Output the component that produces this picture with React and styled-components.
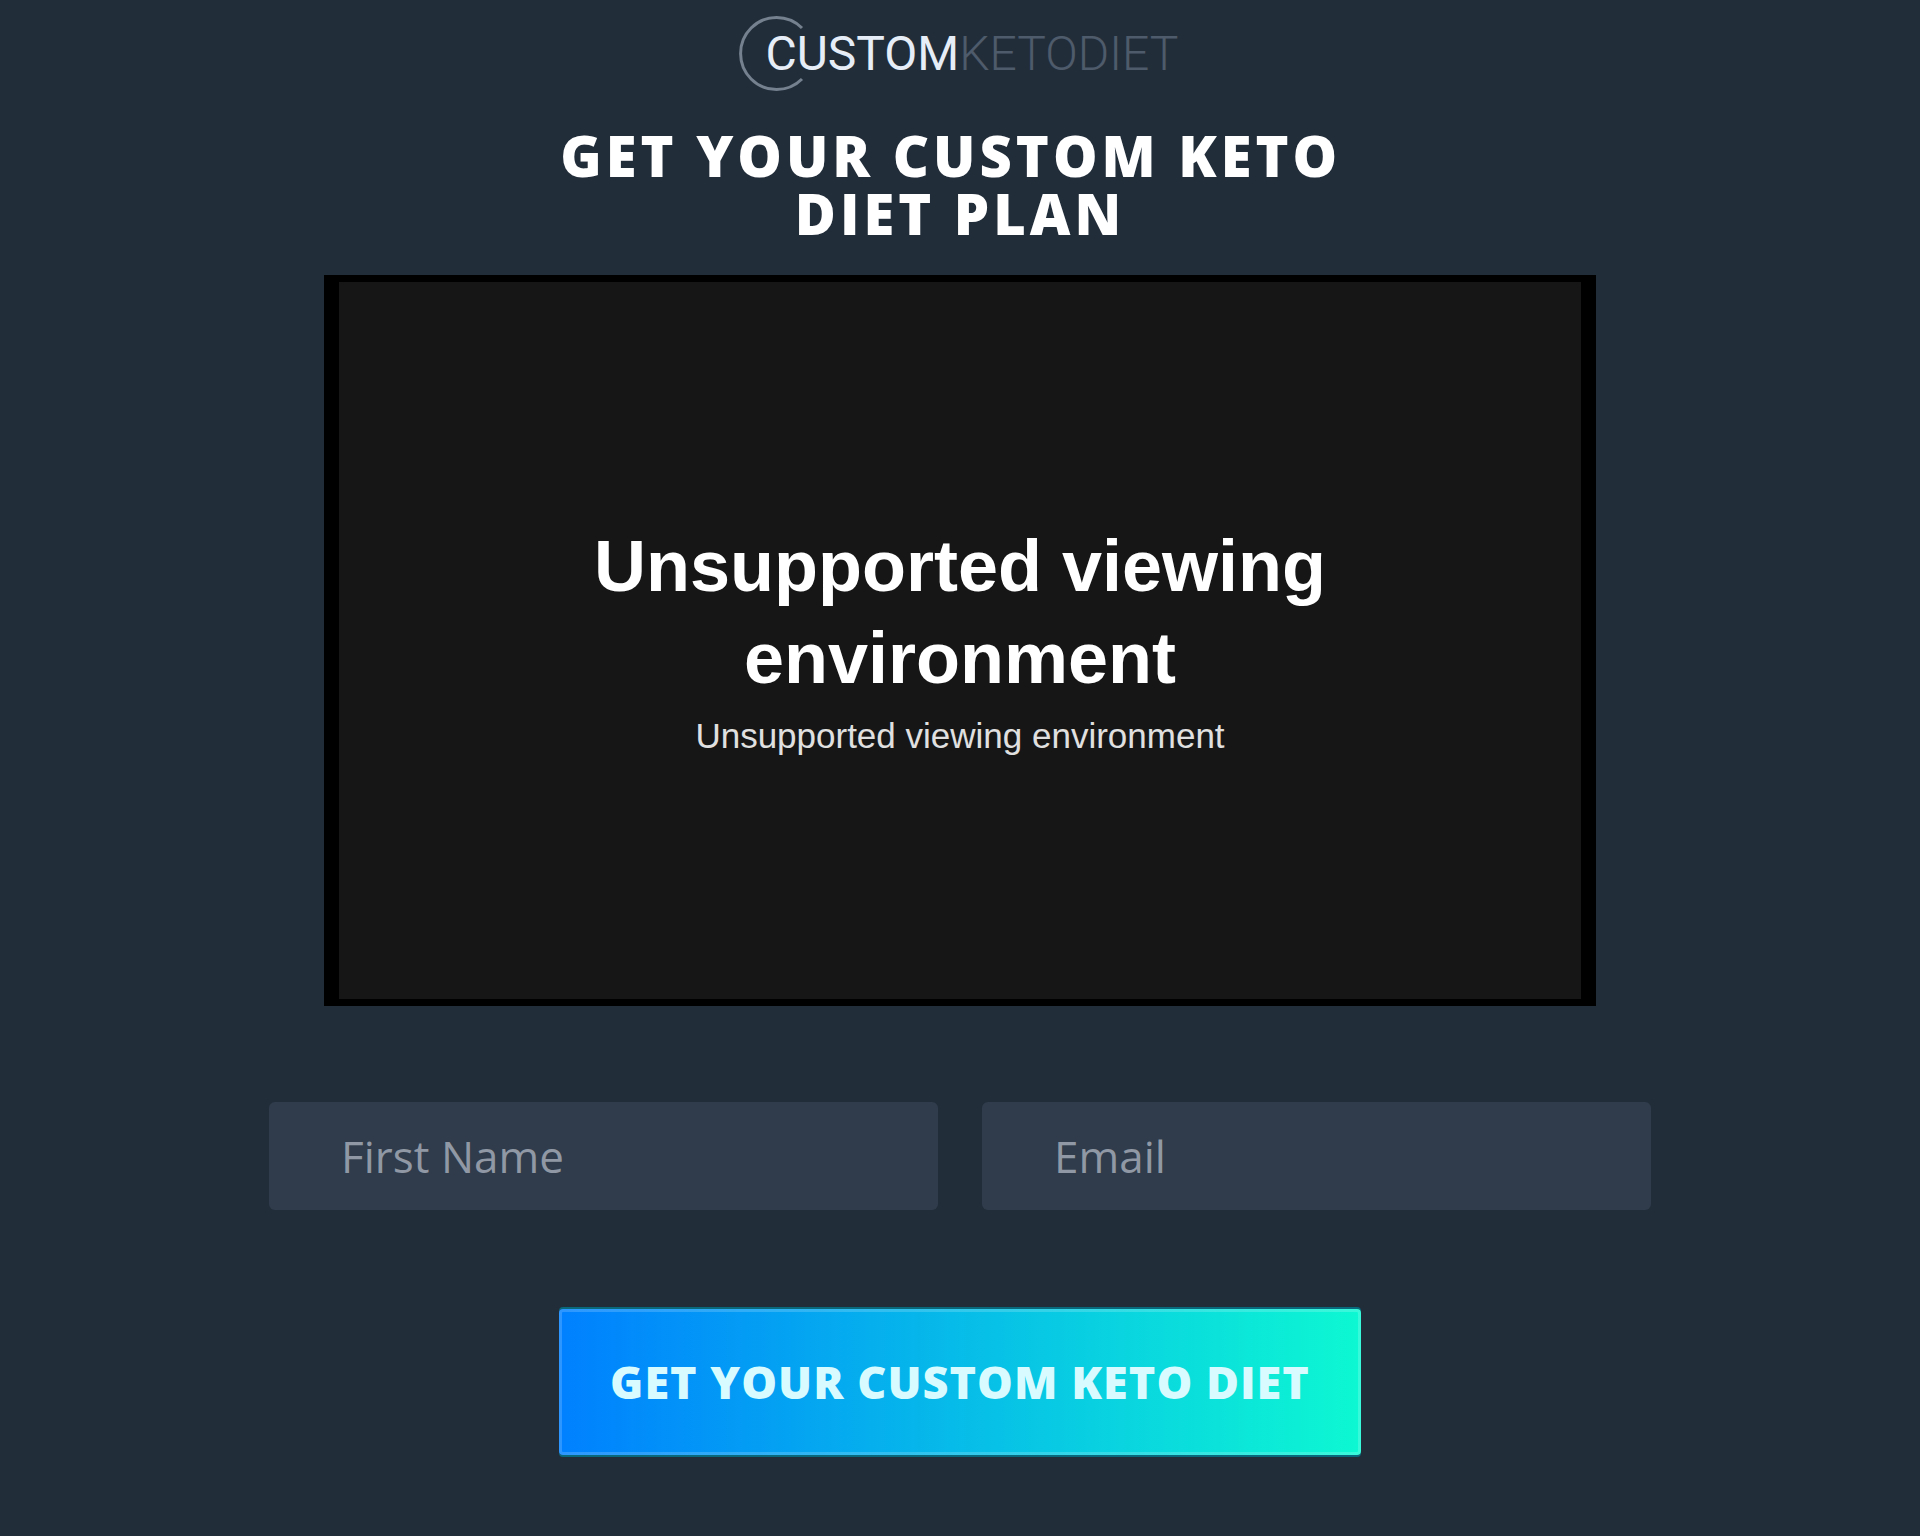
import React from 'react'
import styled, { createGlobalStyle } from 'styled-components'

function App() {
  return (
    <Container>
      <GlobalStyle />
      <Logo href="#">
        <Ring viewBox="0 0 64 76" aria-hidden="true">
          <path d="M61 13A36 36 0 1 0 61 64" />
        </Ring>
        <LogoText>CUSTOM</LogoText>
        <LogoText $dim>KETODIET</LogoText>
      </Logo>

      <Title>
        GET YOUR CUSTOM KETO{'\u00a0'}<br />
        DIET PLAN
      </Title>

      <Player>
        <Screen>
          <ErrorTitle>Unsupported viewing environment</ErrorTitle>
          <ErrorText>Unsupported viewing environment</ErrorText>
        </Screen>
      </Player>

      <Form onSubmit={(e) => e.preventDefault()}>
        <Fields>
          <Input type="text" name="name" placeholder="First Name" aria-label="First Name" />
          <Input type="email" name="email" placeholder="Email" aria-label="Email" />
        </Fields>
        <Button type="submit">GET YOUR CUSTOM KETO DIET</Button>
      </Form>
    </Container>
  )
}

export default App

const GlobalStyle = createGlobalStyle`
  * {
    box-sizing: border-box;
  }

  body {
    margin: 0;
    background: #222d3a;
  }
`

const Container = styled.main`
  display: flex;
  flex-direction: column;
  align-items: center;
  min-height: 100vh;
  padding: 15px 24px 72px;
  background: #222d3a;
  color: #fff;
  font-family: 'Open Sans', 'Noto Sans', sans-serif;
`

const Logo = styled.a`
  position: relative;
  display: flex;
  align-items: center;
  height: 78px;
  padding-left: 24px;
  text-decoration: none;
`

const Ring = styled.svg`
  position: absolute;
  left: 0;
  top: 0;
  width: 64px;
  height: 76px;
  overflow: visible;

  path {
    fill: none;
    stroke: #75818e;
    stroke-width: 3;
  }
`

const LogoText = styled.span`
  font-family: Roboto, sans-serif;
  font-size: 48px;
  font-weight: ${(props) => (props.$dim ? 300 : 400)};
  line-height: 78px;
  color: ${(props) => (props.$dim ? '#4e5b6a' : '#e6edf6')};
`

const Title = styled.h1`
  margin: 33px 0 0;
  font-size: 56px;
  font-weight: 800;
  line-height: 58px;
  letter-spacing: 4px;
  text-align: center;
`

const Player = styled.section`
  width: 68%;
  max-width: 1274px;
  margin-top: 33px;
  padding: 7px 15px;
  background: #000;
`

const Screen = styled.div`
  display: flex;
  flex-direction: column;
  align-items: center;
  justify-content: center;
  aspect-ratio: 1244 / 718;
  padding-bottom: 4px;
  background: #161616;
  font-family: 'Liberation Sans', Arial, sans-serif;
  text-align: center;
`

const ErrorTitle = styled.h2`
  max-width: 800px;
  margin: 0;
  font-size: 72px;
  line-height: 92px;
`

const ErrorText = styled.p`
  margin: 10px 0 0;
  font-size: 35px;
  line-height: 44px;
  color: #e0e0e0;
`

const Form = styled.form`
  display: flex;
  flex-direction: column;
  align-items: center;
  width: 100%;
  max-width: 1382px;
  margin-top: 96px;
`

const Fields = styled.div`
  display: grid;
  grid-template-columns: 1fr 1fr;
  gap: 44px;
  width: 100%;
`

const Input = styled.input`
  width: 100%;
  height: 108px;
  padding: 0 72px;
  border: 0;
  border-radius: 6px;
  background: #303c4b;
  color: #fff;
  font-family: inherit;
  font-size: 44px;

  &::placeholder {
    color: #8f98a4;
    opacity: 1;
  }
`

const Button = styled.button`
  margin-top: 99px;
  padding: 43px 51px;
  border: 0;
  border-radius: 4px;
  background: linear-gradient(90deg, #0080ff, #0df8d2);
  box-shadow:
    inset 0 0 0 3px rgba(255, 255, 255, 0.18),
    0 -2px 0 #08687c,
    0 2px 0 #08687c;
  color: #d8fbff;
  font-family: inherit;
  font-size: 45px;
  font-weight: 800;
  line-height: 60px;
  letter-spacing: 1px;
  cursor: pointer;
`
